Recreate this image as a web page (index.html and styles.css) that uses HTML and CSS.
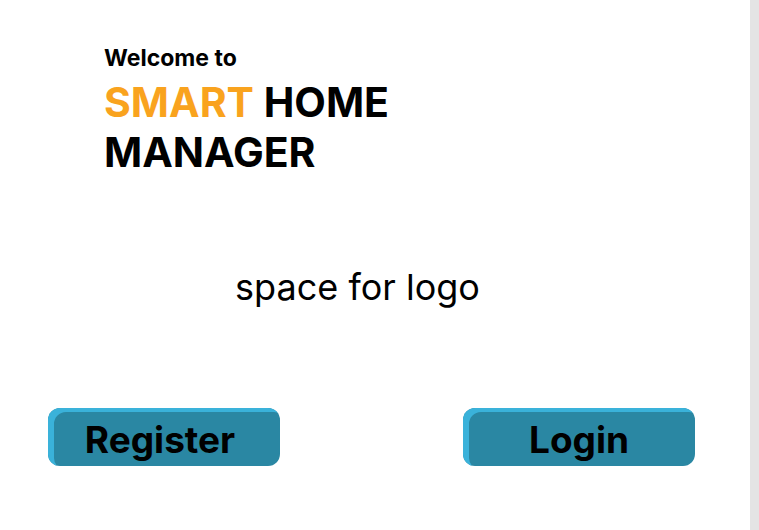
FILE: index.html
```html
<!DOCTYPE html>
<html>
<head>
<meta charset="utf-8">
<link rel="stylesheet" href="styles.css">
</head>
<body>
<div class="page">
  <main class="content">
    <header class="intro">
      <div class="welcome">Welcome to</div>
      <h1 class="title"><span class="accent">SMART</span> HOME<br>MANAGER</h1>
    </header>
    <section class="logo-space">space for logo</section>
    <div class="actions">
      <button class="btn btn-register">Register</button>
      <button class="btn btn-login">Login</button>
    </div>
  </main>
  <div class="scrollbar"></div>
</div>
</body>
</html>
```

FILE: styles.css
```css
html, body {
  margin: 0;
  padding: 0;
  background: #ffffff;
}
.page {
  display: flex;
  width: 759px;
  height: 530px;
  overflow: hidden;
  font-family: "Inter", "Noto Sans", sans-serif;
  color: #000;
}
.content {
  flex: 1;
  display: flex;
  flex-direction: column;
}
.scrollbar {
  width: 9px;
  background: #e4e4e4;
}
.intro {
  padding: 44px 0 0 104px;
}
.welcome {
  font-size: 23px;
  font-weight: 700;
  line-height: 28px;
}
.title {
  margin: 5px 0 0;
  font-size: 41px;
  font-weight: 700;
  line-height: 50px;
}
.accent {
  color: #f9a31e;
}
.logo-space {
  margin-top: 88px;
  padding-right: 35px;
  text-align: center;
  font-size: 36px;
  line-height: 44px;
  font-weight: 400;
}
.actions {
  display: flex;
  justify-content: space-between;
  padding: 99px 55px 0 48px;
}
.btn {
  width: 232px;
  height: 58px;
  border: none;
  border-radius: 12px;
  background: #2a87a3;
  box-shadow: inset 6px 4px 0 #3ab2da;
  font-family: "Inter", "Noto Sans", sans-serif;
  font-size: 37px;
  font-weight: 700;
  line-height: 44px;
  color: #000;
  padding: 6px 0 0 0;
}
.btn-register {
  padding-right: 8px;
}
```
